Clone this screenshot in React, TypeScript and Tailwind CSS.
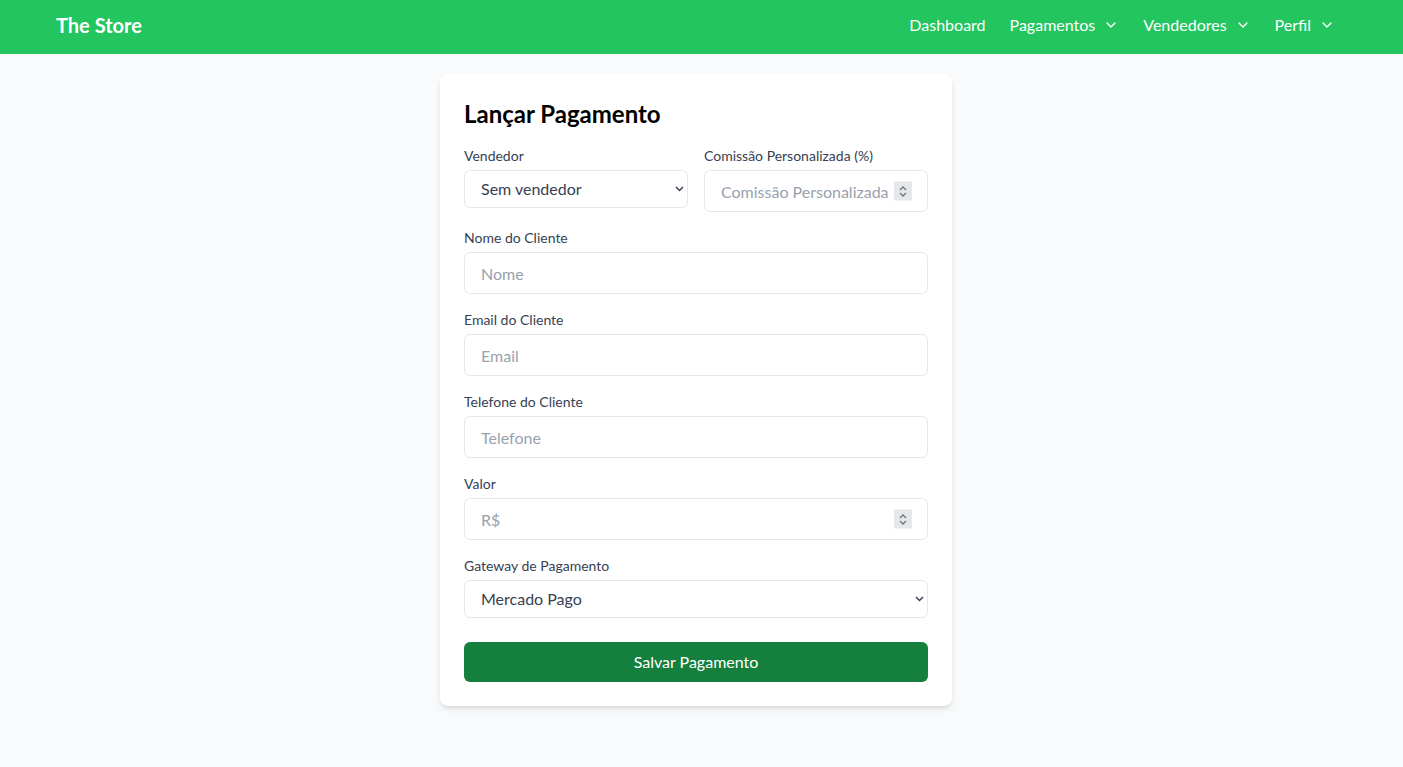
import { ChevronDown } from "lucide-react";

const navItems = [
  { label: "Dashboard", menu: false },
  { label: "Pagamentos", menu: true },
  { label: "Vendedores", menu: true },
  { label: "Perfil", menu: true },
];

// stand-in for the native number spinner
const Spinner = () => (
  <div className="absolute right-[16px] top-1/2 -translate-y-1/2 w-[18px] h-[19px] bg-gray-200 flex items-center justify-center pointer-events-none">
    <svg width="10" height="14" viewBox="0 0 10 14" fill="none" stroke="#6b7280" strokeWidth="1.3">
      <path d="M2 5.5 L5 2.5 L8 5.5" />
      <path d="M2 8.5 L5 11.5 L8 8.5" />
    </svg>
  </div>
);

const inputClass =
  "w-full h-[42px] px-4 border border-gray-200 rounded-md bg-white text-base text-gray-800 placeholder:text-gray-400 outline-none";

const Field = ({
  label,
  placeholder,
  number = false,
}: {
  label: string;
  placeholder: string;
  number?: boolean;
}) => (
  <div className="mb-4">
    <label className="block text-sm text-gray-700 mb-1">{label}</label>
    <div className="relative">
      <input type="text" placeholder={placeholder} className={inputClass} />
      {number && <Spinner />}
    </div>
  </div>
);

const Select = ({ value }: { value: string }) => (
  <div className="relative">
    <select
      defaultValue={value}
      className="w-full h-[38px] pl-4 pr-8 border border-gray-200 rounded-md bg-white text-base text-gray-700 appearance-none outline-none"
    >
      <option>{value}</option>
    </select>
    <svg
      width="9"
      height="6"
      viewBox="0 0 9 6"
      fill="none"
      stroke="#374151"
      strokeWidth="1.5"
      className="absolute right-[4px] top-[16px] pointer-events-none"
    >
      <path d="M1 1 L4.5 4.5 L8 1" />
    </svg>
  </div>
);

const App = () => {
  return (
    <div className="min-h-screen bg-gray-50 font-['Lato',sans-serif]">
      {/* Top Bar */}
      <nav className="h-[54px] bg-[#22c55e] flex items-center justify-between pl-14 pr-[68px] pb-1">
        <span className="text-white font-bold text-xl">The Store</span>
        <div className="flex items-center gap-6">
          {navItems.map((item) => (
            <span key={item.label} className="flex items-center gap-2 text-white text-base">
              {item.label}
              {item.menu && <ChevronDown size={16} strokeWidth={2} />}
            </span>
          ))}
        </div>
      </nav>

      {/* Form */}
      <main className="flex justify-center pt-5 pr-[11px]">
        <div className="w-[512px] bg-white rounded-lg shadow-md p-6">
          <h1 className="text-2xl font-bold text-black mb-4">Lançar Pagamento</h1>

          <div className="grid grid-cols-2 gap-4 mb-4">
            <div>
              <label className="block text-sm text-gray-700 mb-1">Vendedor</label>
              <Select value="Sem vendedor" />
            </div>
            <div>
              <label className="block text-sm text-gray-700 mb-1">Comissão Personalizada (%)</label>
              <div className="relative">
                <input type="text" placeholder="Comissão Personalizada" className={inputClass} />
                <Spinner />
              </div>
            </div>
          </div>

          <Field label="Nome do Cliente" placeholder="Nome" />
          <Field label="Email do Cliente" placeholder="Email" />
          <Field label="Telefone do Cliente" placeholder="Telefone" />
          <Field label="Valor" placeholder="R$" number />

          <div className="mb-6">
            <label className="block text-sm text-gray-700 mb-1">Gateway de Pagamento</label>
            <Select value="Mercado Pago" />
          </div>

          <button className="w-full h-10 bg-[#15803d] text-white text-base rounded-md">
            Salvar Pagamento
          </button>
        </div>
      </main>
    </div>
  );
};

export default App;
